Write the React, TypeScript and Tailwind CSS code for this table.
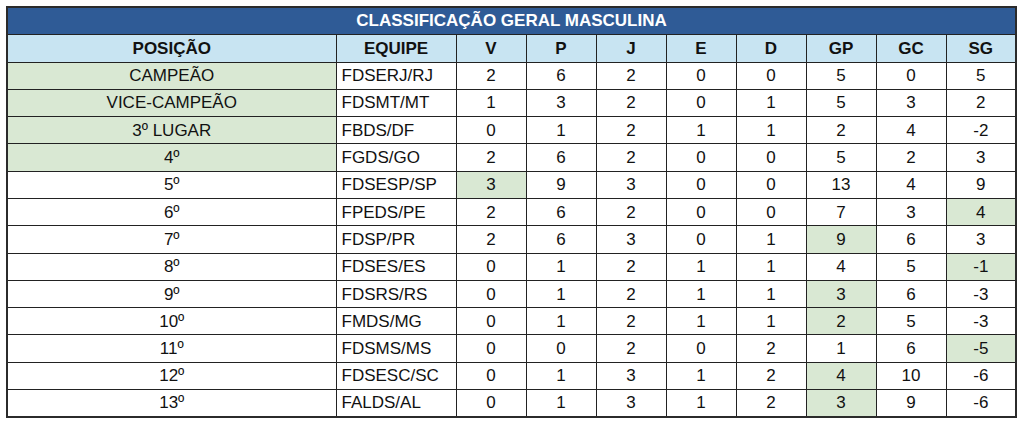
import React from "react";

type Row = { pos: string; team: string; vals: string[]; hl: number[]; posHl?: boolean };

const rows: Row[] = [
  { pos: "CAMPEÃO", team: "FDSERJ/RJ", vals: ["2", "6", "2", "0", "0", "5", "0", "5"], hl: [], posHl: true },
  { pos: "VICE-CAMPEÃO", team: "FDSMT/MT", vals: ["1", "3", "2", "0", "1", "5", "3", "2"], hl: [], posHl: true },
  { pos: "3º LUGAR", team: "FBDS/DF", vals: ["0", "1", "2", "1", "1", "2", "4", "-2"], hl: [], posHl: true },
  { pos: "4º", team: "FGDS/GO", vals: ["2", "6", "2", "0", "0", "5", "2", "3"], hl: [], posHl: true },
  { pos: "5º", team: "FDSESP/SP", vals: ["3", "9", "3", "0", "0", "13", "4", "9"], hl: [0] },
  { pos: "6º", team: "FPEDS/PE", vals: ["2", "6", "2", "0", "0", "7", "3", "4"], hl: [7] },
  { pos: "7º", team: "FDSP/PR", vals: ["2", "6", "3", "0", "1", "9", "6", "3"], hl: [5] },
  { pos: "8º", team: "FDSES/ES", vals: ["0", "1", "2", "1", "1", "4", "5", "-1"], hl: [7] },
  { pos: "9º", team: "FDSRS/RS", vals: ["0", "1", "2", "1", "1", "3", "6", "-3"], hl: [5] },
  { pos: "10º", team: "FMDS/MG", vals: ["0", "1", "2", "1", "1", "2", "5", "-3"], hl: [5] },
  { pos: "11º", team: "FDSMS/MS", vals: ["0", "0", "2", "0", "2", "1", "6", "-5"], hl: [7] },
  { pos: "12º", team: "FDSESC/SC", vals: ["0", "1", "3", "1", "2", "4", "10", "-6"], hl: [5] },
  { pos: "13º", team: "FALDS/AL", vals: ["0", "1", "3", "1", "2", "3", "9", "-6"], hl: [5] },
];

const heads = ["V", "P", "J", "E", "D", "GP", "GC", "SG"];

export default function App() {
  return (
    <div className="w-[1024px] h-[424px] bg-white pt-[6px] pl-[6px]" style={{ fontFamily: '"Liberation Sans", Arial, sans-serif' }}>
      <table className="table-fixed border-collapse w-[1011px] text-[17px] text-[#111] border-2 border-[#2b2b2b]">
        <colgroup>
          <col className="w-[329px]" />
          <col className="w-[120px]" />
          {heads.map((h) => (
            <col key={h} className="w-[70px]" />
          ))}
        </colgroup>
        <tbody>
          <tr className="h-[27px] bg-[#2f5b96]">
            <td colSpan={10} className="border border-[#222] text-center text-white font-bold leading-none p-0">
              CLASSIFICAÇÃO GERAL MASCULINA
            </td>
          </tr>
          <tr className="h-[28px] bg-[#c8e4f2]">
            <td className="border border-[#222] text-center font-bold leading-none p-0">POSIÇÃO</td>
            <td className="border border-[#222] text-center font-bold leading-none p-0">EQUIPE</td>
            {heads.map((h) => (
              <td key={h} className="border border-[#222] text-center font-bold leading-none p-0">
                {h}
              </td>
            ))}
          </tr>
          {rows.map((r) => (
            <tr key={r.pos} className="h-[27.3px]">
              <td className={`border border-[#222] text-center leading-none p-0 ${r.posHl ? "bg-[#d9e8d3]" : "bg-white"}`}>{r.pos}</td>
              <td className="border border-[#222] text-left leading-none py-0 pl-[5px]">{r.team}</td>
              {r.vals.map((v, i) => (
                <td
                  key={i}
                  className={`border border-[#222] text-center leading-none p-0 ${r.hl.includes(i) ? "bg-[#d9e8d3]" : "bg-white"}`}
                >
                  {v}
                </td>
              ))}
            </tr>
          ))}
        </tbody>
      </table>
    </div>
  );
}
